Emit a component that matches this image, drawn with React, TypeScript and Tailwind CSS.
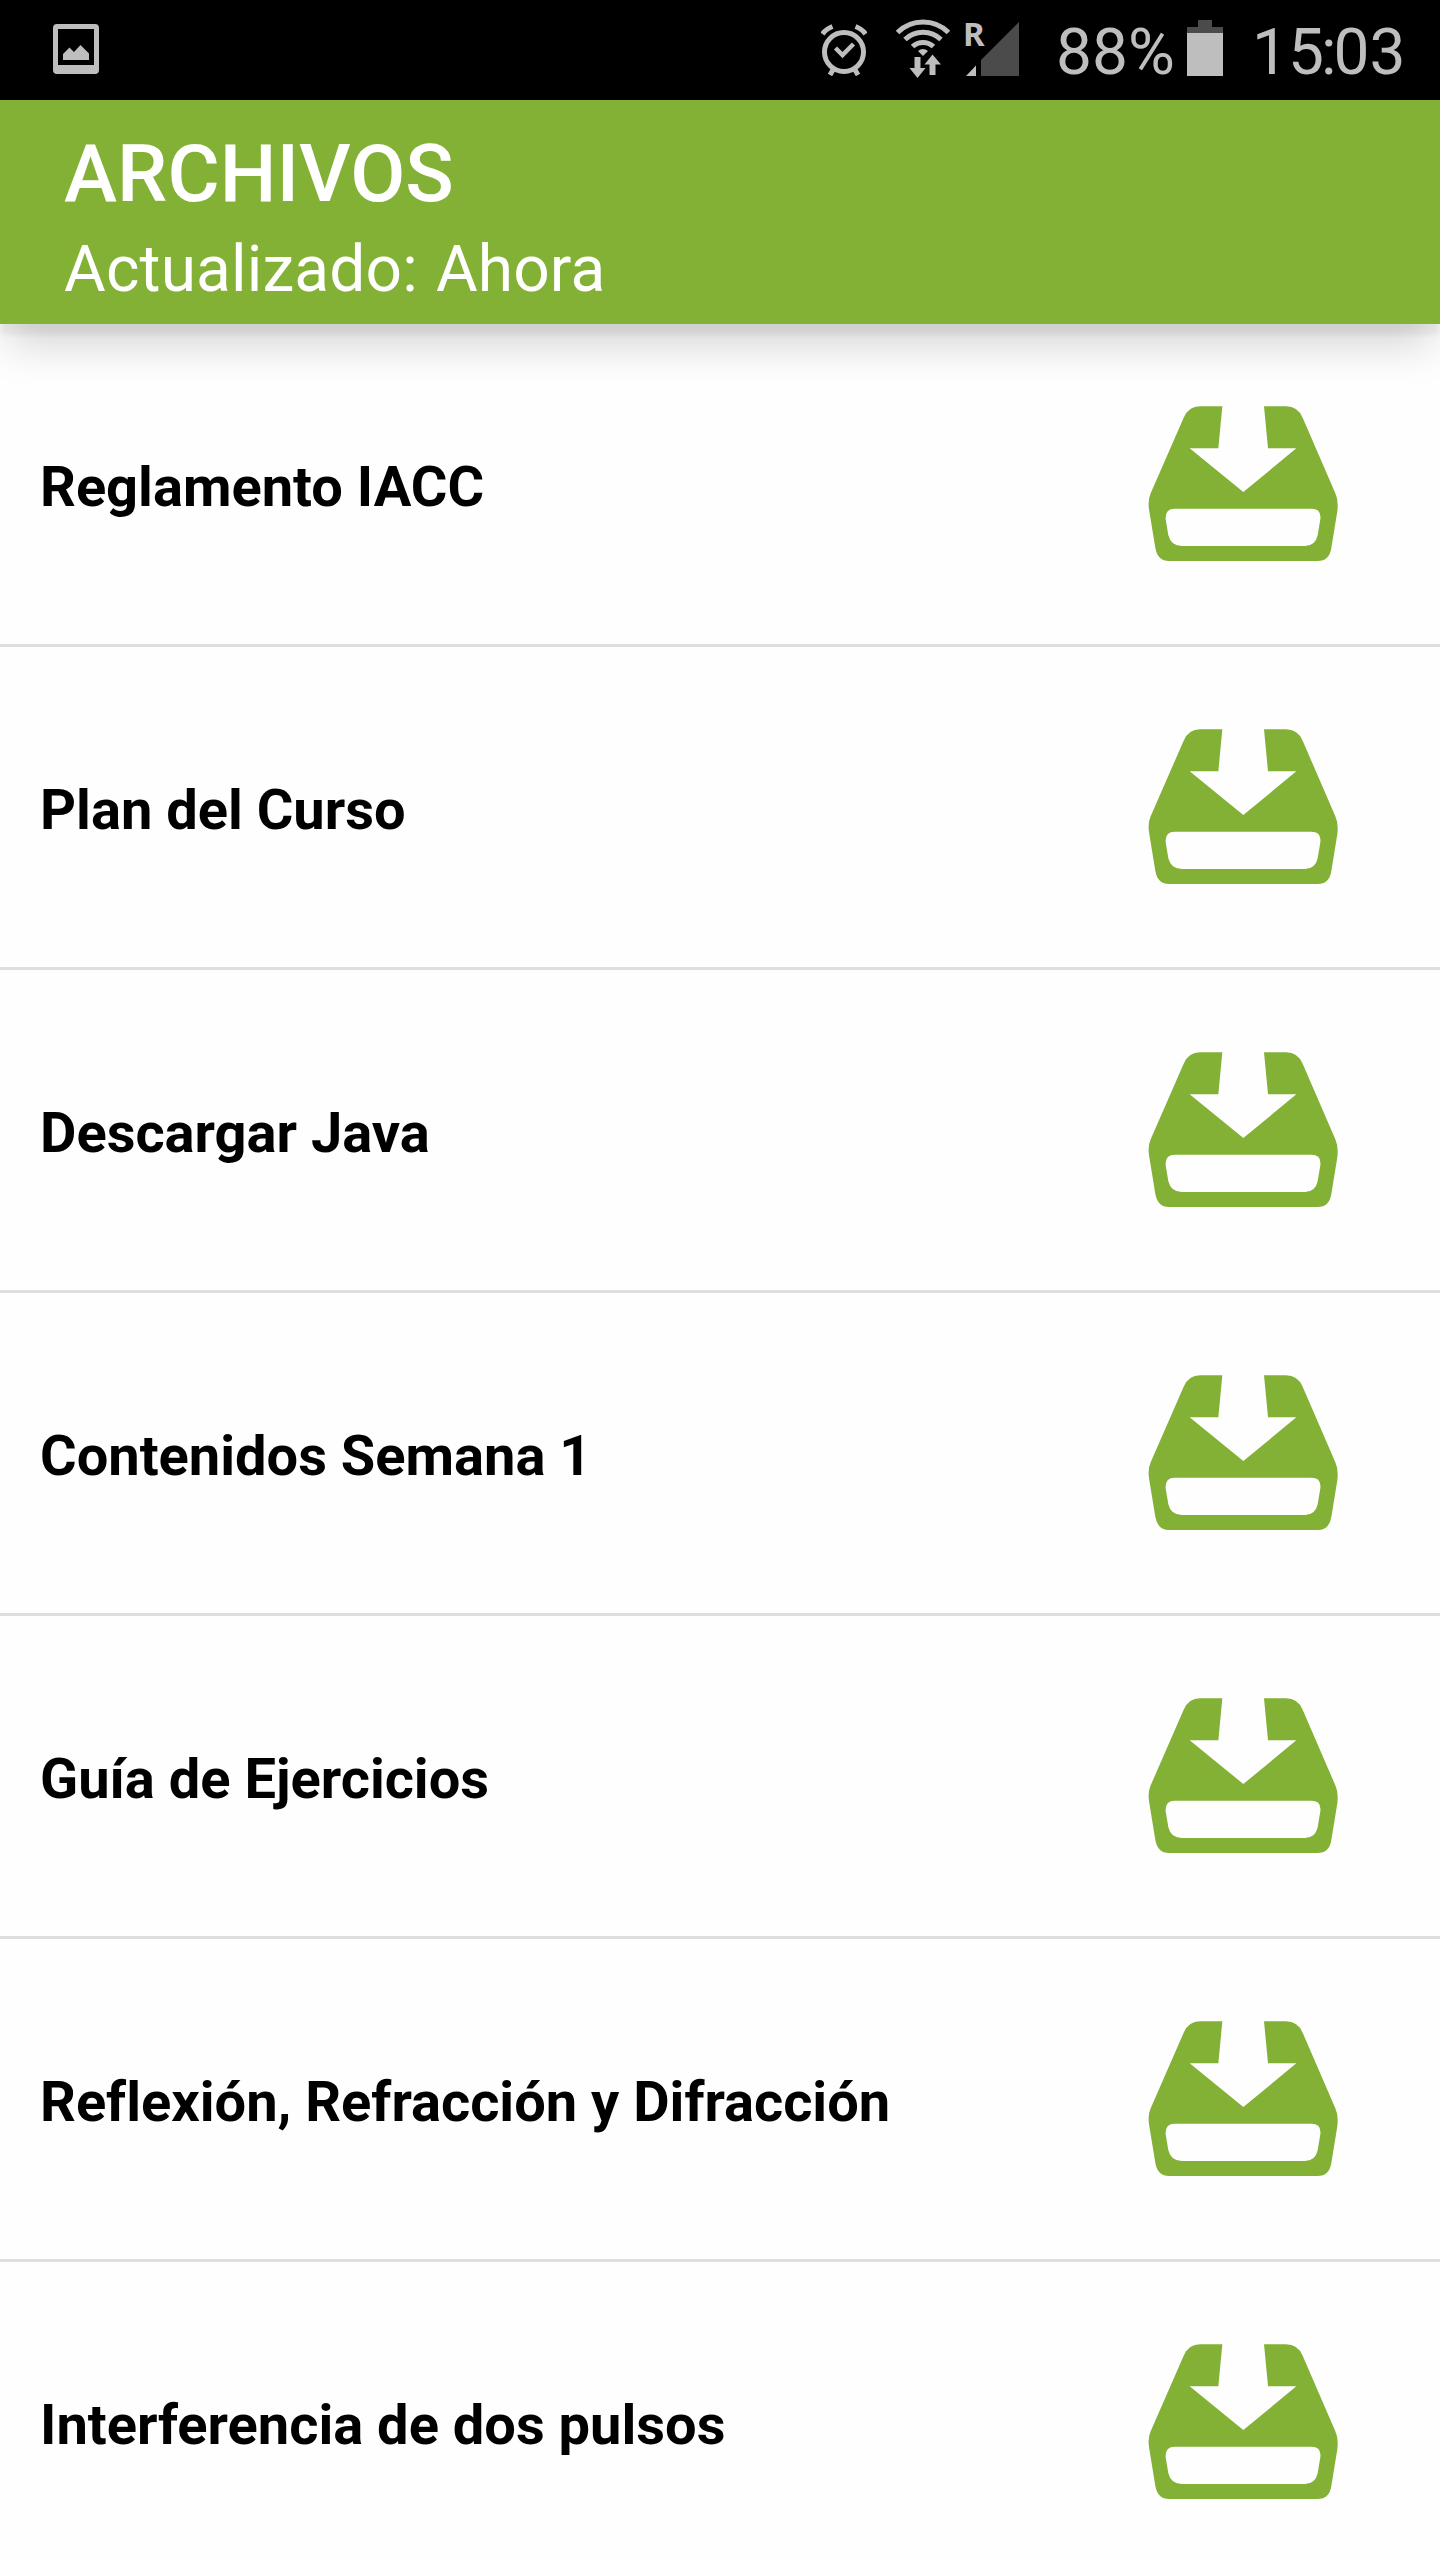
import React from 'react';

interface FileItem {
  id: number;
  name: string;
}

const files: FileItem[] = [
  { id: 1, name: 'Reglamento IACC' },
  { id: 2, name: 'Plan del Curso' },
  { id: 3, name: 'Descargar Java' },
  { id: 4, name: 'Contenidos Semana 1' },
  { id: 5, name: 'Guía de Ejercicios' },
  { id: 6, name: 'Reflexión, Refracción y Difracción' },
  { id: 7, name: 'Interferencia de dos pulsos' },
];

const PictureIcon = () => (
  <svg viewBox="0 0 46 50" className="h-[50px] w-[46px] fill-[#bebebe]">
    <path
      fillRule="evenodd"
      d="M4 0H42Q46 0 46 4V46Q46 50 42 50H4Q0 50 0 46V4Q0 0 4 0ZM5 5V41H41V5Z"
    />
    <path d="M10 36V30L16.500 23.500L21 28L27.500 21L36 29.500V36Z" />
  </svg>
);

const AlarmIcon = () => (
  <svg viewBox="0 0 46 52" className="h-[52px] w-[46px] fill-none stroke-[#bebebe]">
    <circle cx="23" cy="28" r="19.500" strokeWidth="5" />
    <path d="M14.500 24L21.500 31L32.500 20" strokeWidth="4.500" />
    <path d="M1.500 10Q5 5 11.500 2.500M44.500 10Q41 5 34.500 2.500" strokeWidth="5" />
    <path d="M13 44L9 51M33 44L37 51" strokeWidth="5" />
  </svg>
);

const WifiIcon = () => (
  <svg viewBox="0 0 54 60" className="h-[60px] w-[54px]">
    <g className="fill-none stroke-[#bebebe]" strokeWidth="5">
      <path d="M1.500 13.500A36 36 0 0 1 52.500 13.500" />
      <path d="M9 20.500A26 26 0 0 1 45 20.500" />
      <path d="M16.500 27.500A15.500 15.500 0 0 1 37.500 27.500" />
    </g>
    <g className="fill-[#bebebe]">
      <path d="M22 32Q27 28 32 32L27 37Z" />
      <path d="M18.500 38H24.500V49H29.500L21.500 59L13.500 49H18.500Z" />
      <path d="M36.500 35.500L45 45.500H39.500V56H33.500V45.500H28.500Z" />
    </g>
  </svg>
);

const SignalIcon = () => (
  <svg viewBox="-6 -12 64 72" className="h-[72px] w-16">
    <text x="-1" y="26.500" className="fill-[#bebebe] font-['Noto_Sans'] text-[33px] leading-none font-bold">
      R
    </text>
    <path d="M17 41L55 3V57H17Z" className="fill-[#4b4b4b]" />
    <path d="M2 57L12 46.500V57Z" className="fill-[#bebebe]" />
  </svg>
);

const BatteryIcon = () => (
  <svg viewBox="0 0 36 56" className="h-14 w-9">
    <path d="M11 0H25V7H36V13H0V7H11Z" className="fill-[#4b4b4b]" />
    <path d="M0 13H36V56H0Z" className="fill-[#bebebe]" />
  </svg>
);

const DownloadIcon = () => (
  <svg viewBox="0 0 570 468" className="h-[156px] w-[190px] fill-[#83b135]">
    <path
      fillRule="evenodd"
      d="M156 1H223L211 127H125L286 258L445 127H360L348 1H414Q449 1 464 35L562 262Q572 284 568 316L550 426Q544 465 509 465H63Q29 465 22 426L4 316Q-2 284 8 262L107 35Q122 1 156 1ZM80 308Q51 308 53 340L61 388Q69 420 101 420H471Q502 420 509 388L517 340Q521 308 490 308Z"
    />
  </svg>
);

const StatusBar = () => (
  <div className="flex h-[100px] items-start bg-black pr-[37px] pl-[53px] text-[64px] leading-[75px] text-[#bebebe]">
    <div className="mt-6 mr-auto">
      <PictureIcon />
    </div>
    <div className="mt-6">
      <AlarmIcon />
    </div>
    <div className="mt-[19px] ml-[29px]">
      <WifiIcon />
    </div>
    <div className="mt-[7px] ml-2">
      <SignalIcon />
    </div>
    <span className="mt-[15px] ml-[34px] w-[131px] whitespace-nowrap">88%</span>
    <div className="mt-5">
      <BatteryIcon />
    </div>
    <span className="mt-[15px] ml-[29px] w-[151px] whitespace-nowrap">
      15<span className="-mx-[3px]">:</span>03
    </span>
  </div>
);

const Header = () => (
  <header className="relative z-10 h-56 bg-[#83b135] px-16 pt-[27px] text-white shadow-[0_28px_40px_-8px_rgba(0,0,0,0.17),0_12px_4px_-1px_rgba(0,0,0,0.05)]">
    <h1 className="text-[80px] leading-[94px] font-medium">ARCHIVOS</h1>
    <p className="mt-[11px] text-[64px] leading-[75px] tracking-[0.15px] [word-spacing:2px]">
      Actualizado: Ahora
    </p>
  </header>
);

const FileRow: React.FC<{ file: FileItem }> = ({ file }) => (
  <li className="flex h-[323px] items-center justify-between border-b-3 border-[#dedede] pr-[102px] pl-10">
    <span className="pt-[5px] text-[56px] font-bold text-black">{file.name}</span>
    <DownloadIcon />
  </li>
);

export default function App() {
  return (
    <div className="h-[2560px] w-[1440px] overflow-hidden bg-[#fefefe] font-[Roboto,sans-serif] [font-variant-ligatures:none]">
      <StatusBar />
      <Header />
      <ul>
        {files.map((file) => (
          <FileRow key={file.id} file={file} />
        ))}
      </ul>
    </div>
  );
}
